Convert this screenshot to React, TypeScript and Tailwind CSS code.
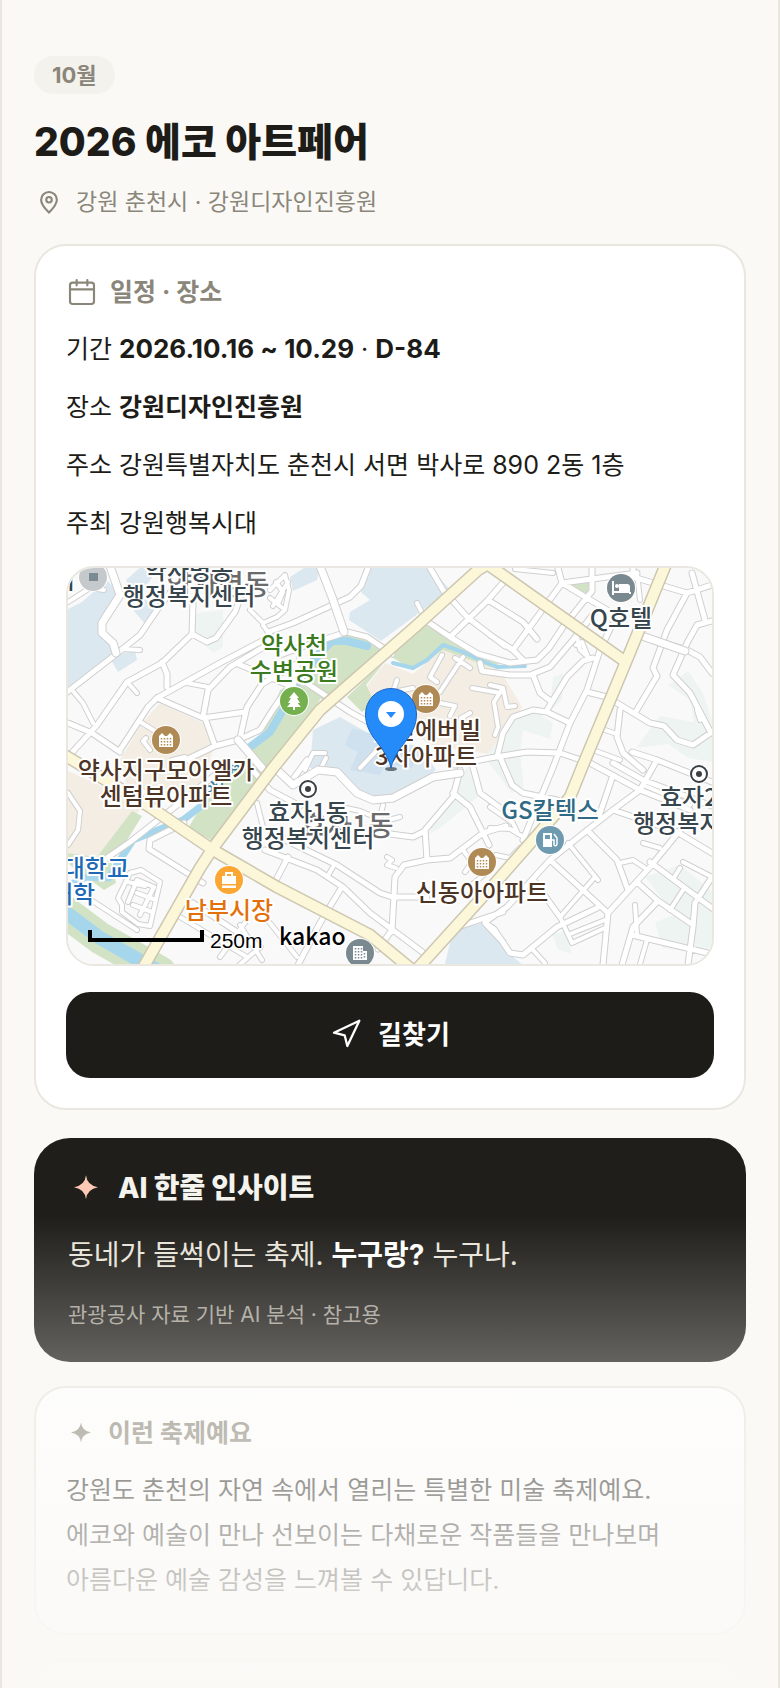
import type { ReactNode } from 'react';

const FONT = "font-['Inter','Noto_Sans_CJK_KR',sans-serif]";

type Area = { fill: string; d: string };

const areas: Area[] = [
  { fill: '#dce8f0', d: 'M66 610 82 602 107 580 122 597 100 627 115 652 66 692z' },
  { fill: '#dce8f0', d: 'M126 580 142 566 152 578 135 598z M134 611 143 597 158 610 146 625z' },
  { fill: '#dce8f0', d: 'M111 660 118 672 137 660 135 651 115 655z' },
  { fill: '#dce8f0', d: 'M290 577 307 566 320 566 317 580 293 591z' },
  { fill: '#dce8f0', d: 'M367 566 430 566 450 590 381 641 349 620 350 612 370 600 361 592z' },
  { fill: '#dce8f0', d: 'M313 730 340 717 382 741 420 746 436 770 394 798 370 798 337 772 310 768z' },
  { fill: '#cfe1ee', d: 'M352 728 376 735 392 752 380 775 350 770 358 752 345 745z M396 745 418 752 412 768 394 765z' },
  { fill: '#dce8f0', d: 'M453 930 483 923 493 929 508 953 527 968 444 968z' },
  { fill: '#eef4f1', d: 'M197 613 223 610 223 647 213 653 193 634z' },
  { fill: '#eef4f1', d: 'M553 677 563 673 562 700 550 711z' },
  { fill: '#eef4f1', d: 'M513 720 533 710 553 723 550 739 523 730 520 753 524 786 512 793 488 762 492 740z' },
  { fill: '#eef4f1', d: 'M668 685 688 671 703 693 714 727 714 762 688 758 668 744 636 748 660 716 694 722 690 700z' },
  { fill: '#eef4f1', d: 'M448 798 470 762 480 795 440 828 428 835z' },
  { fill: '#eef4f1', d: 'M645 877 680 865 714 893 714 954 662 948 655 922 675 915z' },
  { fill: '#eef4f1', d: 'M552 934 570 930 571 953 558 950z' },
  { fill: '#f3ede3', d: 'M385 663 413 674 443 648 500 670 510 687 522 707 500 737 488 754 430 745 370 700 365 688z' },
  { fill: '#f3ede3', d: 'M160 703 203 723 214 747 200 790 128 790 120 760 142 723z' },
  { fill: '#f3ede3', d: 'M66 770 110 790 140 810 97 857 66 855z' },
  { fill: '#d2e3c5', d: 'M310 662 322 640 347 633 370 638 388 651 330 706 308 688z' },
  { fill: '#d2e3c5', d: 'M280 690 297 682 322 696 302 730 268 765 215 842 188 828 205 800 240 765 262 735z' },
  { fill: '#d2e3c5', d: 'M132 811 142 816 127 840 110 857 116 883 104 890 66 862 66 853 97 857z' },
  { fill: '#d2e3c5', d: 'M427 622 450 639 500 664 490 667 443 650 413 670 390 656z' },
  { fill: '#d2e3c5', d: 'M347 697 370 675 383 664 366 685 375 703 362 712z' },
  { fill: '#d2e3c5', d: 'M568 585 590 582 587 598z' },
];

const lanes = [
  'M72 690 83 703 93 723', 'M122 649 140 650', 'M128 683 137 693',
  'M187 683 208 687', 'M250 610 263 623 277 617 285 610', 'M263 625 275 642',
  'M68 602 90 588 104 590', 'M270 590 285 575 289 590 285 610 270 598', 'M273 606 288 582',
  'M276 582 283 592 278 604', 'M417 603 421 611', 'M463 657 440 692', 'M442 655 430 677 437 682',
  'M397 680 393 692 413 688', 'M455 658 470 668', 'M472 688 500 693', 'M490 685 503 688 494 702 498 727 495 735',
  'M503 688 507 707 515 706', 'M440 703 455 706 450 716', 'M461 718 470 713', 'M305 770 313 753 325 753',
  'M320 770 326 758', 'M360 768 382 745', 'M577 637 580 650 588 657 582 642 576 645', 'M605 730 617 734',
  'M593 750 620 760', 'M515 569 553 573', 'M568 843 598 880', 'M595 877 560 917', 'M570 934 605 920',
  'M572 943 607 927', 'M560 917 572 943', 'M620 863 633 860 645 868', 'M643 843 660 848',
  'M683 890 670 910', 'M683 862 712 877', 'M680 868 675 876', 'M490 807 513 823 518 834',
  'M490 828 510 829 522 836', 'M533 950 545 963', 'M387 857 392 860 387 865 396 868',
  'M383 805 380 817', 'M337 806 360 811 385 821 400 817', 'M333 867 327 877', 'M68 793 80 811 78 830 68 845',
  'M122 905 118 898 130 873 141 870 160 882 150 926 138 924 122 912z', 'M128 902 137 880 154 887',
  'M154 887 140 915', 'M137 893 156 900', 'M133 905 152 912', 'M88 898 137 930', 'M180 917 247 957',
  'M247 920 220 957', 'M260 947 237 967', 'M142 723 158 733', 'M150 750 143 741 146 738', 'M172 760 185 757 192 764',
  'M257 803 263 827', 'M270 923 297 957', 'M463 850 472 862 465 872', 'M490 870 470 886', 'M240 925 262 960',
  'M697 710 700 720', 'M643 785 690 805', 'M637 573 640 600', 'M496 855 510 858 520 848',
  'M300 655 293 690', 'M635 905 637 934', 'M647 940 640 964', 'M128 882 145 886',
];

const streets = [
  'M66 693 115 655 140 635 157 610 172 590', 'M68 757 97 725 127 682 162 663 192 634 193 603',
  'M192 634 207 642 216 638 235 612 240 598', 'M162 662 167 674 167 687', 'M68 723 92 733 120 752',
  'M120 750 148 707 157 698 220 663 262 641', 'M157 698 203 718 245 712', 'M203 717 208 690 230 667 262 648',
  'M205 718 215 746 190 758', 'M215 746 238 740 260 730 274 708 290 685', 'M240 738 247 707 262 684 300 662',
  'M268 632 293 623 350 597 361 586 368 568', 'M280 655 313 643 347 632 367 637 392 654',
  'M290 672 350 712 372 724', 'M238 664 300 690', 'M430 568 443 590 468 618 505 646', 'M425 620 450 637 478 654 510 663 537 660 549 648 563 627 592 591 592 568',
  'M450 637 488 600 508 577', 'M488 600 523 622 537 639', 'M490 635 513 650 523 660', 'M513 650 562 583 558 568',
  'M480 663 482 671 510 675 530 675 550 667 573 640 595 612', 'M562 583 637 573', 'M562 583 607 610',
  'M633 568 633 577 687 593 712 585', 'M687 593 667 630 653 668 657 676 635 713', 'M692 573 705 620',
  'M712 621 697 625 687 643 673 675 690 693 711 733', 'M645 637 687 650 700 657 712 673',
  'M612 625 600 650 587 690 570 723 552 770 523 840', 'M587 692 607 697 650 723 664 726 677 740 693 745 712 732',
  'M570 723 547 712 533 710 513 717 503 733 497 757', 'M455 765 490 758 527 752 560 753 590 763 640 790 690 810',
  'M533 675 540 693 552 702', 'M547 710 567 677 583 661 593 658', 'M620 710 617 737 623 753 643 770',
  'M632 752 657 760 712 782', 'M657 760 640 790 613 810 585 832 550 860 507 907 488 920', 'M500 757 512 785 523 793 557 800',
  'M613 775 597 822', 'M613 763 643 780 712 806', 'M613 810 677 832 712 853', 'M587 830 617 860 628 890',
  'M682 828 650 867 608 913 603 965', 'M550 860 608 913', 'M535 882 560 917', 'M485 923 494 929 510 953 523 955 557 927 597 908',
  'M650 862 712 908', 'M637 882 657 900 693 925', 'M712 877 695 903 693 927 688 965', 'M657 902 633 927 622 965',
  'M632 935 712 954', 'M460 770 453 797 425 830 427 860', 'M453 793 470 807 489 845', 'M375 832 413 837 425 831',
  'M506 826 483 833 450 858 427 860 404 865 395 877 392 930 378 949', 'M393 897 427 897',
  'M275 835 337 865 380 893 395 898', 'M265 850 317 870 343 887 370 913 425 954', 'M288 857 275 882',
  'M340 890 320 923 298 965', 'M473 767 480 793 506 812', 'M455 928 503 912', 'M485 923 503 942',
  'M307 760 290 783', 'M104 860 130 842 190 795 215 775', 'M184 823 150 840 149 849 203 883', 'M193 903 260 947',
  'M250 767 270 790 300 806',
];

const avenues = [
  'M110 566 120 595 102 623 102 633 113 643 116 653', 'M320 566 332 597 344 632', 'M238 740 262 768',
  'M275 768 293 785 318 770 337 772 357 793 373 800 393 798 433 777 460 773', 'M645 637 685 651',
];

const highways = [
  'M66 756 150 807 213 850 277 887 370 935 410 968',
  'M488 564 478 570 415 627 320 710 273 768 213 848 200 868 143 968',
  'M484 562 497 571 623 660',
  'M666 564 628 657 583 765 570 797 540 832 497 881 418 968',
];

type Label = {
  x: number;
  y: number;
  text: string;
  fill: string;
  anchor?: 'start' | 'middle' | 'end';
};

const districtLabels: Label[] = [
  { x: 218, y: 595, text: '약사명동', fill: '#6b6b6b' },
  { x: 347, y: 836, text: '효자1동', fill: '#6b6b6b' },
];

const labels: Label[] = [
  { x: 75, y: 589, text: '시', fill: '#37454d', anchor: 'end' },
  { x: 189, y: 579, text: '약사명동', fill: '#37454d' },
  { x: 189, y: 605, text: '행정복지센터', fill: '#37454d' },
  { x: 294, y: 654, text: '약사천', fill: '#3c7a20' },
  { x: 294, y: 680, text: '수변공원', fill: '#3c7a20' },
  { x: 166, y: 779, text: '약사지구모아엘가', fill: '#4d3526' },
  { x: 166, y: 805, text: '센텀뷰아파트', fill: '#4d3526' },
  { x: 426, y: 739, text: '현진에버빌', fill: '#4d3526' },
  { x: 426, y: 765, text: '3차아파트', fill: '#4d3526' },
  { x: 621, y: 627, text: 'Q호텔', fill: '#37454d' },
  { x: 550, y: 819, text: 'GS칼텍스', fill: '#2f6b85' },
  { x: 660, y: 806, text: '효자2동', fill: '#37454d', anchor: 'start' },
  { x: 633, y: 832, text: '행정복지센터', fill: '#37454d', anchor: 'start' },
  { x: 308, y: 821, text: '효자1동', fill: '#37454d' },
  { x: 308, y: 847, text: '행정복지센터', fill: '#37454d' },
  { x: 482, y: 901, text: '신동아아파트', fill: '#4d3526' },
  { x: 229, y: 919, text: '남부시장', fill: '#e3700b' },
  { x: 129, y: 877, text: '대학교', fill: '#1e68b5', anchor: 'end' },
  { x: 95, y: 903, text: '대학', fill: '#1e68b5', anchor: 'end' },
];

function Poi({ x, y, color, children }: { x: number; y: number; color: string; children: ReactNode }) {
  return (
    <g transform={`translate(${x} ${y})`}>
      <circle r="15" fill="#fff" />
      <circle r="14" fill={color} />
      {children}
    </g>
  );
}

function ApartmentGlyph() {
  return (
    <>
      <path d="M-7 7V-4L-4-7-1-4H1L4-7 7-4V7z" fill="#fff" />
      <path d="M-4.500-2V6M-1.500-2V6M1.500-2V6M4.500-2V6" stroke="#b08a55" strokeWidth="1.500" strokeDasharray="1.500 1.500" />
    </>
  );
}

function Roads({ paths, width, fill, casing, edge }: { paths: string[]; width: number; fill: string; casing: string; edge: number }) {
  const d = paths.join(' ');
  return (
    <g fill="none" strokeLinecap="round" strokeLinejoin="round">
      <path d={d} stroke={casing} strokeWidth={width + edge} />
      <path d={d} stroke={fill} strokeWidth={width} />
    </g>
  );
}

function FestivalMap() {
  const local = [...streets, ...lanes].join(' ');
  return (
    <svg
      viewBox="68 568 644 396"
      preserveAspectRatio="xMidYMid slice"
      role="img"
      aria-label="강원디자인진흥원 지도"
      className="block size-full bg-[#f9f9f9]"
    >
      {areas.map((a) => (
        <path key={a.d} d={a.d} fill={a.fill} />
      ))}
      <g fill="none" strokeLinecap="round" strokeLinejoin="round">
        <path d="M60 908 100 938 160 972" stroke="#d2e3c5" strokeWidth="32" />
        <path d="M60 908 100 938 160 972" stroke="#a5d6ec" strokeWidth="14" />
        <path d="M367 646 347 641 332 641 318 655 297 683 283 710 270 732 250 747" stroke="#a5d6ec" strokeWidth="8" />
        <path d="M200 807 183 820 133 840 118 863 109 878 86 877 68 886" stroke="#a5d6ec" strokeWidth="7" />
        <path d="M393 663 413 668 427 660 443 645 463 652 480 660 497 667 525 666" stroke="#a5d6ec" strokeWidth="4" />
        <path d={local} stroke="#d0d0d0" strokeWidth="6" />
        <path d={streets.join(' ')} stroke="#d0d0d0" strokeWidth="7" />
        <path d={lanes.join(' ')} stroke="#fff" strokeWidth="4" />
        <path d={streets.join(' ')} stroke="#fff" strokeWidth="5" />
      </g>
      <Roads paths={avenues} width={7} edge={2} fill="#fff" casing="#cfcfcf" />
      <Roads paths={highways} width={10} edge={3} fill="#fbf7d8" casing="#cdc6b0" />

      <text
        transform="translate(228 784) rotate(-42)"
        textAnchor="middle"
        className="font-['Noto_Sans_CJK_KR',sans-serif] text-[16px] font-medium"
        fill="#3b7f9b"
      >
        약사천
      </text>

      <g
        className="font-['Noto_Sans_CJK_KR',sans-serif] font-medium"
        stroke="#fff"
        strokeWidth="4"
        strokeLinejoin="round"
        paintOrder="stroke"
      >
        {districtLabels.map((l) => (
          <text key={l.text} x={l.x} y={l.y} fill={l.fill} textAnchor="middle" className="text-[28px]">
            {l.text}
          </text>
        ))}
        {labels.map((l) => (
          <text key={`${l.x}-${l.y}`} x={l.x} y={l.y} fill={l.fill} textAnchor={l.anchor ?? 'middle'} className="text-[24px]">
            {l.text}
          </text>
        ))}
      </g>

      <Poi x={93} y={577} color="#c6c9cc">
        <path d="M-4-4H5V4H-4z" fill="#7b8b93" />
      </Poi>
      <Poi x={294} y={701} color="#74b04e">
        <path d="M0-9 5-3H3L6 2H3.500L7 6H1V9H-1V6H-7L-3.500 2H-6L-3-3H-5z" fill="#fff" />
      </Poi>
      <Poi x={166} y={740} color="#b08a55"><ApartmentGlyph /></Poi>
      <Poi x={426} y={699} color="#b08a55"><ApartmentGlyph /></Poi>
      <Poi x={482} y={862} color="#b08a55"><ApartmentGlyph /></Poi>
      <Poi x={621} y={588} color="#7a888f">
        <path d="M-8-7V7M-8 4H9M9 4V6" stroke="#fff" strokeWidth="2" fill="none" />
        <path d="M-2-4H6Q9-4 9-1V3H-2z" fill="#fff" />
        <circle cx="-4" cy="-2" r="2" fill="#fff" />
      </Poi>
      <Poi x={550} y={840} color="#6f9bb0">
        <path d="M-7-7H2V7H-7z" fill="#fff" />
        <path d="M-5-5H0V-1H-5z" fill="#6f9bb0" />
        <path d="M2 0H4V5Q6 7 7 4V-2L4-6" stroke="#fff" strokeWidth="1.500" fill="none" />
      </Poi>
      <Poi x={229} y={880} color="#fba733">
        <path d="M-7-4H7V4H-7z M-7 5.500H7V8H-7z" fill="#fff" />
        <path d="M-3-4V-7H3V-4" stroke="#fff" strokeWidth="2" fill="none" />
      </Poi>
      <Poi x={360} y={953} color="#7a888f">
        <path d="M-7-7H3V-2H7V7H-7z" fill="#fff" />
        <path d="M-4.500-5V6M-1.500-5V6M1.500-5V6M4.500 0V6" stroke="#7a888f" strokeWidth="1.500" strokeDasharray="1.500 1.500" />
      </Poi>
      {[[308, 789], [699, 774]].map(([x, y]) => (
        <g key={x}>
          <circle cx={x} cy={y} r="10" fill="#fff" />
          <circle cx={x} cy={y} r="8" fill="#fff" stroke="#3a3f44" strokeWidth="2" />
          <circle cx={x} cy={y} r="3" fill="#3a3f44" />
        </g>
      ))}

      <ellipse cx="391" cy="769" rx="6" ry="2" fill="#4a5560" opacity="0.800" />
      <path
        d="M391 768C386 745 365.500 738 365.500 714A25.500 25.500 0 0 1 416.500 714C416.500 738 396 745 391 768z"
        fill="#258bf9"
        stroke="#1b66c4"
      />
      <circle cx="391" cy="714" r="13" fill="#fff" />
      <path d="M386 712H396L391 718z" fill="#258bf9" />

      <path d="M90 930V940H202V930" fill="none" stroke="#000" strokeWidth="4" />
      <g stroke="#fff" strokeWidth="3" strokeLinejoin="round" paintOrder="stroke" fill="#000">
        <text x="210" y="948" className="font-['Liberation_Sans',sans-serif] text-[21px]">250m</text>
        <text x="279" y="945" className="font-['Noto_Sans_CJK_KR',sans-serif] text-[23px] font-medium">kakao</text>
      </g>
    </svg>
  );
}

function PinIcon() {
  return (
    <svg viewBox="0 0 24 24" className="size-[30px] shrink-0" fill="none" stroke="currentColor" strokeWidth="1.700" strokeLinejoin="round" aria-hidden="true">
      <path d="M12 20.500c-2.800-2.900-6.300-6.300-6.300-10.200a6.300 6.300 0 0 1 12.600 0c0 3.900-3.500 7.300-6.300 10.200z" />
      <circle cx="12" cy="10.200" r="2.200" />
    </svg>
  );
}

function CalendarIcon() {
  return (
    <svg viewBox="0 0 24 24" className="size-8 shrink-0" fill="none" stroke="currentColor" strokeWidth="1.600" strokeLinecap="round" strokeLinejoin="round" aria-hidden="true">
      <rect x="3" y="5" width="18" height="16" rx="2" />
      <path d="M3 10h18M8 3v4M16 3v4" />
    </svg>
  );
}

function ArrowIcon() {
  return (
    <svg viewBox="0 0 24 24" className="size-8 shrink-0" fill="none" stroke="currentColor" strokeWidth="1.700" strokeLinejoin="round" aria-hidden="true">
      <path d="M3 11 22 2 13 21 11 13z" />
    </svg>
  );
}

function Sparkle({ className }: { className: string }) {
  return (
    <svg viewBox="0 0 24 24" className={className} fill="currentColor" aria-hidden="true">
      <path d="M12 3.500Q12.700 10.200 20 11.500 12.700 12.800 12 19.500 11.300 12.800 4 11.500 11.300 10.200 12 3.500z" />
    </svg>
  );
}

export default function App() {
  return (
    <main className={`relative h-screen overflow-hidden border-x-2 border-[#e9e7e0] bg-[#faf9f6] px-8 pt-14 text-[#1d1c18] ${FONT}`}>
      <header>
        <span className="inline-flex h-[38px] items-center rounded-full bg-[#f3f2ec] px-[18px] align-top text-[22px] font-bold text-[#8b867a]">
          10월
        </span>
        <h1 className="mt-[18px] text-[39px] leading-[60px] font-extrabold">2026 에코 아트페어</h1>
        <p className="mt-[14px] flex h-8 items-center gap-3 text-[23px] leading-8 text-[#8b867a]">
          <PinIcon />
          강원 춘천시 · 강원디자인진흥원
        </p>
      </header>

      <section className="mt-[26px] rounded-[32px] border-2 border-[#e9e7e0] bg-white p-[30px]">
        <h2 className="flex h-8 items-center gap-3 text-[25px] leading-[34px] font-bold text-[#8b867a]">
          <CalendarIcon />
          일정 · 장소
        </h2>
        <div className="mt-[18px] flex flex-col gap-3 text-[25px] leading-[46px]">
          <p>기간 <b className="text-[26px]">2026.10.16 ~ 10.29</b> · <b className="text-[26px]">D-84</b></p>
          <p>장소 <b>강원디자인진흥원</b></p>
          <p>주소 강원특별자치도 춘천시 서면 박사로 890 2동 1층</p>
          <p>주최 강원행복시대</p>
        </div>
        <div className="mt-5 h-[400px] overflow-hidden rounded-[28px] border-2 border-[#e9e7e0]">
          <FestivalMap />
        </div>
        <button type="button" className="mt-[26px] flex h-[86px] w-full items-center justify-center gap-4 rounded-3xl bg-[#1d1c18] pb-0.5 text-[26px] font-bold text-white">
          <ArrowIcon />
          길찾기
        </button>
      </section>

      <section className="mt-7 h-[224px] rounded-[36px] bg-[#1f1e1a] px-[34px] pt-8">
        <h2 className="flex h-9 items-center gap-[14px] text-[28px] leading-[38px] font-extrabold text-[#f5f3ee]">
          <Sparkle className="size-9 shrink-0 text-[#ffc9b5]" />
          AI 한줄 인사이트
        </h2>
        <p className="mt-[26px] text-[28px] leading-[46px] text-[#e8e4da]">
          동네가 들썩이는 축제. <b className="text-white">누구랑?</b> 누구나.
        </p>
        <p className="mt-[21px] text-[21px] leading-8 text-[#a39f95]">관광공사 자료 기반 AI 분석 · 참고용</p>
      </section>

      <section className="mt-6 rounded-[32px] border-2 border-[#e9e7e0] bg-white p-[30px]">
        <h2 className="flex h-[30px] items-center gap-3 text-[25px] leading-[30px] font-bold text-[#8b867a]">
          <Sparkle className="size-[30px] shrink-0" />
          이런 축제예요
        </h2>
        <p className="mt-5 text-[25px] leading-[45px]">
          강원도 춘천의 자연 속에서 열리는 특별한 미술 축제예요.<br />
          에코와 예술이 만나 선보이는 다채로운 작품들을 만나보며<br />
          아름다운 예술 감성을 느껴볼 수 있답니다.
        </p>
      </section>

      <section className="mt-6 h-40 rounded-[32px] border-2 border-[#e9e7e0] bg-white" />

      <div className="pointer-events-none absolute inset-x-0 bottom-0 h-[472px] bg-linear-to-b from-[#faf9f6]/0 to-[#faf9f6]" />
    </main>
  );
}
